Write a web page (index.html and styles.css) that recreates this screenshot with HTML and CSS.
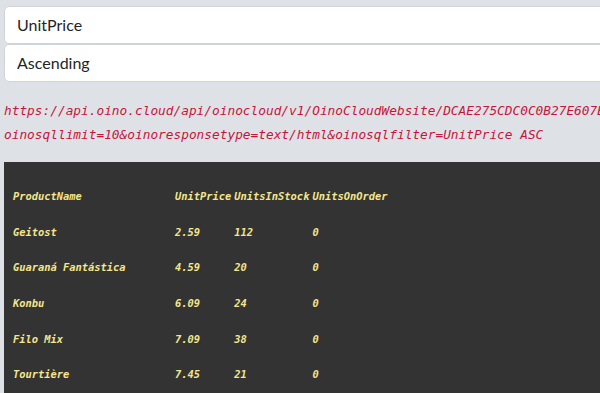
FILE: index.html
```html
<!DOCTYPE html>
<html lang="en">
<head>
    <meta charset="UTF-8">
    <meta name="viewport" content="width=device-width, initial-scale=1.0">
    <title>Oino Cloud | Products</title>
    <link rel="stylesheet" href="styles.css">
</head>
<body>

<main class="page">
    <div class="controls">
        <select id="orderField" class="form-control">
            <option value="UnitPrice">UnitPrice</option>
            <option value="ProductName">ProductName</option>
            <option value="UnitsInStock">UnitsInStock</option>
        </select>
        <select id="orderDir" class="form-control">
            <option value="ASC">Ascending</option>
            <option value="DESC">Descending</option>
        </select>
    </div>

    <p class="api-url">https://api.oino.cloud/api/oinocloud/v1/OinoCloudWebsite/DCAE275CDC0C0B27E607B9A1C3F5/Products?<br>oinosqllimit=10&amp;oinoresponsetype=text/html&amp;oinosqlfilter=UnitPrice ASC</p>

    <div class="result">
        <table>
            <thead>
                <tr>
                    <th>ProductName</th>
                    <th>UnitPrice</th>
                    <th>UnitsInStock</th>
                    <th>UnitsOnOrder</th>
                </tr>
            </thead>
            <tbody>
                <tr><td>Geitost</td><td>2.59</td><td>112</td><td>0</td></tr>
                <tr><td>Guaraná Fantástica</td><td>4.59</td><td>20</td><td>0</td></tr>
                <tr><td>Konbu</td><td>6.09</td><td>24</td><td>0</td></tr>
                <tr><td>Filo Mix</td><td>7.09</td><td>38</td><td>0</td></tr>
                <tr><td>Tourtière</td><td>7.45</td><td>21</td><td>0</td></tr>
            </tbody>
        </table>
    </div>
</main>

</body>
</html>
```

FILE: styles.css
```css
html {
    overflow: hidden;
}

body {
    margin: 0;
    background-color: #dee2e6;
    font-family: Lato, "Noto Sans", sans-serif;
}

.page {
    width: 1100px;
    padding: 6px 0 0 4px;
}

.controls {
    display: flex;
    flex-direction: column;
}

.form-control {
    display: block;
    width: 100%;
    height: 38px;
    padding: 6px 12px;
    font-family: Lato, sans-serif;
    font-size: 16px;
    line-height: 24px;
    color: #212529;
    background: #fff;
    border: 1px solid #ced4da;
    border-radius: 5px;
    appearance: none;
    -webkit-appearance: none;
    box-sizing: border-box;
}

.api-url {
    margin: 17px 0 16px;
    font-family: "DejaVu Sans Mono", monospace;
    font-style: italic;
    font-size: 12.8px;
    line-height: 23.5px;
    color: #c8143c;
    white-space: nowrap;
}

.result {
    background: #333;
    padding: 16px 9px 6px;
}

table {
    border-collapse: collapse;
    font-family: "DejaVu Sans Mono", monospace;
    font-style: italic;
    font-weight: bold;
    font-size: 10.4px;
    color: #f4e68c;
}

th, td {
    height: 35.7px;
    padding: 0 3px 0 0;
    text-align: left;
    font-weight: bold;
    white-space: nowrap;
}

th:first-child, td:first-child {
    width: 159px;
}

th:nth-child(3), td:nth-child(3) {
    width: 75px;
}
```
